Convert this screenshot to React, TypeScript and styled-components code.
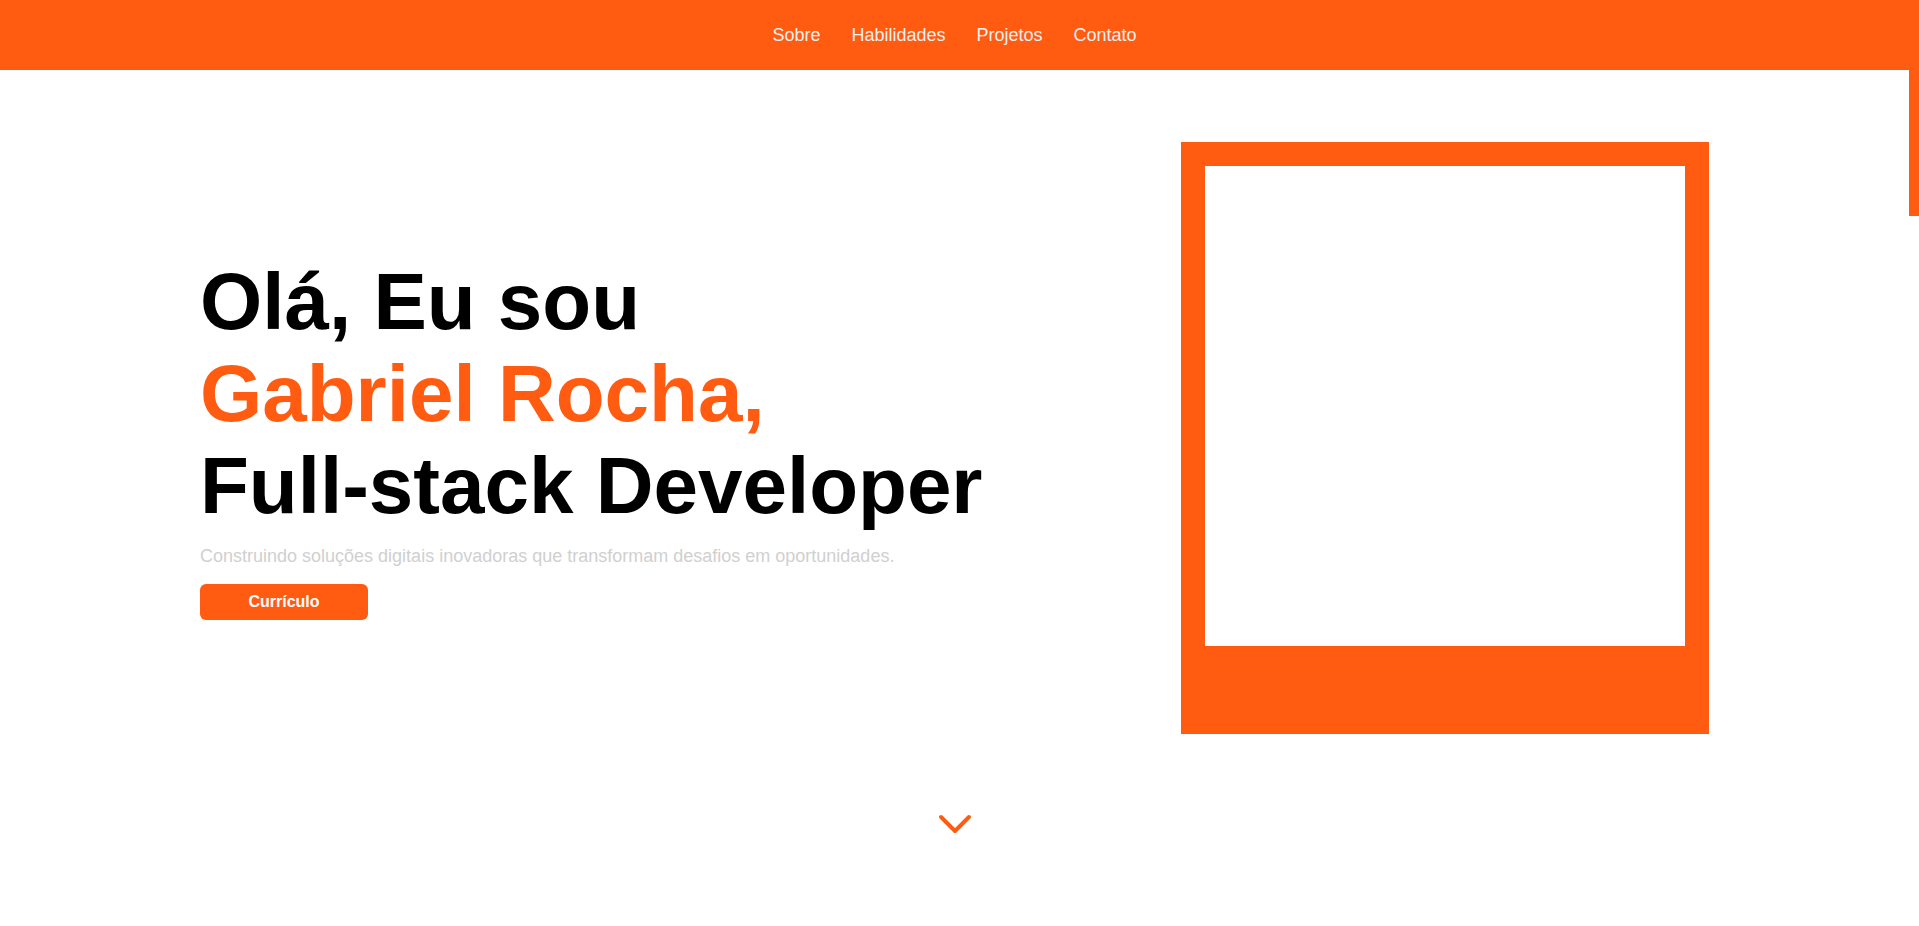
import React, { useEffect, useRef, useState } from "react";
import styled, { createGlobalStyle } from "styled-components";

const ORANGE = "#ff5c12";

const GlobalStyle = createGlobalStyle`
  html, body {
    margin: 0;
    padding: 0;
    height: 100%;
    overflow: hidden;
    background: #ffffff;
    font-family: "Liberation Sans", Arial, sans-serif;
  }
  * { box-sizing: border-box; }
`;

const Shell = styled.div`
  height: 100vh;
  display: flex;
`;

const Page = styled.div`
  flex: 1;
  height: 100%;
  overflow-y: auto;
  scrollbar-width: none;
  &::-webkit-scrollbar { display: none; }
`;

const ScrollTrack = styled.div`
  width: 10px;
  height: 100%;
  background: #ffffff;
  position: relative;
`;

const ScrollThumb = styled.div`
  position: absolute;
  left: 0;
  width: 10px;
  background: ${ORANGE};
`;

const NavBar = styled.nav`
  position: sticky;
  top: 0;
  z-index: 10;
  height: 70px;
  background: ${ORANGE};
  display: flex;
  align-items: center;
  justify-content: center;
`;

const NavList = styled.ul`
  list-style: none;
  margin: 0;
  padding: 0;
  display: flex;
  gap: 31px;
`;

const NavLink = styled.a`
  color: #f0f0f0;
  font-size: 18px;
  text-decoration: none;
`;

const Hero = styled.section`
  height: 856px;
  display: flex;
  flex-direction: column;
  align-items: center;
  padding-top: 72px;
`;

const HeroRow = styled.div`
  width: 100%;
  padding: 0 200px;
  display: flex;
  align-items: center;
  justify-content: space-between;
`;

const TextBlock = styled.div`
  display: flex;
  flex-direction: column;
  align-items: flex-start;
`;

const Title = styled.h1`
  margin: 0;
  font-size: 80px;
  font-weight: 700;
  line-height: normal;
  color: #000000;
`;

const Highlight = styled.span`
  color: ${ORANGE};
`;

const Subtitle = styled.p`
  margin: 14px 0 0;
  font-size: 18px;
  color: #d0d0d0;
`;

const ResumeButton = styled.a`
  margin-top: 17px;
  width: 168px;
  height: 36px;
  border-radius: 6px;
  background: ${ORANGE};
  color: #ffffff;
  font-size: 16px;
  font-weight: 700;
  display: flex;
  align-items: center;
  justify-content: center;
  text-decoration: none;
`;

const PhotoFrame = styled.div`
  width: 528px;
  padding: 24px 24px 88px;
  background: ${ORANGE};
`;

const Photo = styled.div`
  width: 480px;
  height: 480px;
  background: #ffffff;
`;

const ScrollHint = styled.a`
  margin-top: 80px;
  display: flex;
  color: ${ORANGE};
`;

const Section = styled.section`
  height: 760px;
`;

const links = ["Sobre", "Habilidades", "Projetos", "Contato"];

export default function App() {
  const pageRef = useRef<HTMLDivElement>(null);
  const [thumb, setThumb] = useState({ top: 0, height: 216 });

  useEffect(() => {
    const el = pageRef.current;
    if (!el) return;
    const update = () => {
      const ch = el.clientHeight;
      const sh = el.scrollHeight || 1;
      const height = (ch * ch) / sh;
      const top = (el.scrollTop / sh) * ch;
      setThumb({ top, height });
    };
    update();
    el.addEventListener("scroll", update);
    window.addEventListener("resize", update);
    return () => {
      el.removeEventListener("scroll", update);
      window.removeEventListener("resize", update);
    };
  }, []);

  return (
    <Shell>
      <GlobalStyle />
      <Page ref={pageRef}>
        <NavBar>
          <NavList>
            {links.map((l) => (
              <li key={l}>
                <NavLink href={`#${l.toLowerCase()}`}>{l}</NavLink>
              </li>
            ))}
          </NavList>
        </NavBar>
        <Hero>
          <HeroRow>
            <TextBlock>
              <Title>
                Olá, Eu sou
                <br />
                <Highlight>Gabriel Rocha,</Highlight>
                <br />
                Full-stack Developer
              </Title>
              <Subtitle>
                Construindo soluções digitais inovadoras que transformam desafios em oportunidades.
              </Subtitle>
              <ResumeButton href="#">Currículo</ResumeButton>
            </TextBlock>
            <PhotoFrame>
              <Photo />
            </PhotoFrame>
          </HeroRow>
          <ScrollHint href="#sobre" aria-label="Rolar para baixo">
            <svg width="34" height="20" viewBox="0 0 34 20" fill="none">
              <polyline
                points="3,3 17,17 31,3"
                stroke="currentColor"
                strokeWidth="4"
                strokeLinecap="round"
                strokeLinejoin="round"
              />
            </svg>
          </ScrollHint>
        </Hero>
        {links.map((l) => (
          <Section key={l} id={l.toLowerCase()} aria-label={l} />
        ))}
      </Page>
      <ScrollTrack>
        <ScrollThumb style={{ top: thumb.top, height: thumb.height }} />
      </ScrollTrack>
    </Shell>
  );
}
